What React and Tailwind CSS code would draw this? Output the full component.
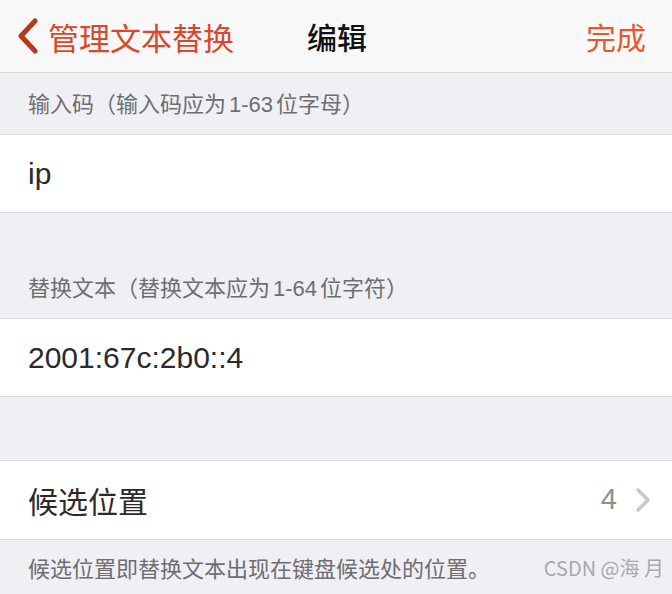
import React from 'react';

const font = { fontFamily: '"Noto Sans CJK SC", "Noto Sans", sans-serif' };
const latin = { fontFamily: '"Liberation Sans", "Noto Sans CJK SC", sans-serif' };

function SectionHeader({ children, className }) {
  return (
    <div className={`flex items-end pl-[28px] pb-[13px] text-[22px] text-[#6d6d72] ${className}`}>
      {children}
    </div>
  );
}

function Row({ children, className }) {
  return (
    <div className={`flex items-center bg-white border-y border-[#dcdcdf] pl-[28px] pr-[21px] ${className}`}>
      {children}
    </div>
  );
}

export default function App() {
  return (
    <div className="w-[672px] h-[594px] overflow-hidden bg-[#f0f0f4] flex flex-col" style={font}>
      <div className="h-[73px] shrink-0 bg-[#f8f8f8] border-b border-[#d6d6d8] flex items-center relative">
        <div className="flex items-center pl-[16px]">
          <svg width="24" height="36" viewBox="0 0 24 36" className="mr-[8px]">
            <path d="M19 3 L5 18 L19 33" fill="none" stroke="#b3391f" strokeWidth="5" strokeLinecap="round" strokeLinejoin="round" />
          </svg>
          <span className="text-[31px] text-[#d8482c] leading-none">管理文本替换</span>
        </div>
        <span className="absolute left-[307px] text-[30px] text-[#111] font-medium leading-none">编辑</span>
        <span className="ml-auto pr-[26px] text-[30px] text-[#e8562f] leading-none">完成</span>
      </div>

      <SectionHeader className="h-[61px] shrink-0">
        <span>输入码（输入码应为<span className="mx-[3px]" style={latin}>1-63</span>位字母）</span>
      </SectionHeader>
      <Row className="h-[79px] shrink-0">
        <span className="text-[30px] text-[#2a2a2c]" style={latin}>ip</span>
      </Row>

      <SectionHeader className="h-[105px] shrink-0">
        <span>替换文本（替换文本应为<span className="mx-[3px]" style={latin}>1-64</span>位字符）</span>
      </SectionHeader>
      <Row className="h-[79px] shrink-0">
        <span className="text-[30px] text-[#2a2a2c]" style={latin}>2001:67c:2b0::4</span>
      </Row>

      <div className="h-[63px] shrink-0" />
      <Row className="h-[80px] shrink-0">
        <span className="text-[30px] text-[#2a2a2c]">候选位置</span>
        <span className="ml-auto text-[29px] text-[#8e8e93]" style={latin}>4</span>
        <svg width="16" height="26" viewBox="0 0 16 26" className="ml-[18px]">
          <path d="M3 3 L13 13 L3 23" fill="none" stroke="#c7c7cc" strokeWidth="3.5" strokeLinecap="round" strokeLinejoin="round" />
        </svg>
      </Row>

      <div className="flex items-center justify-between pl-[28px] pr-[8px] h-[55px] shrink-0">
        <span className="text-[22px] text-[#6d6d72]">候选位置即替换文本出现在键盘候选处的位置。</span>
        <span className="text-[20px] text-[#a8a8ab]">CSDN @海 月</span>
      </div>
    </div>
  );
}
